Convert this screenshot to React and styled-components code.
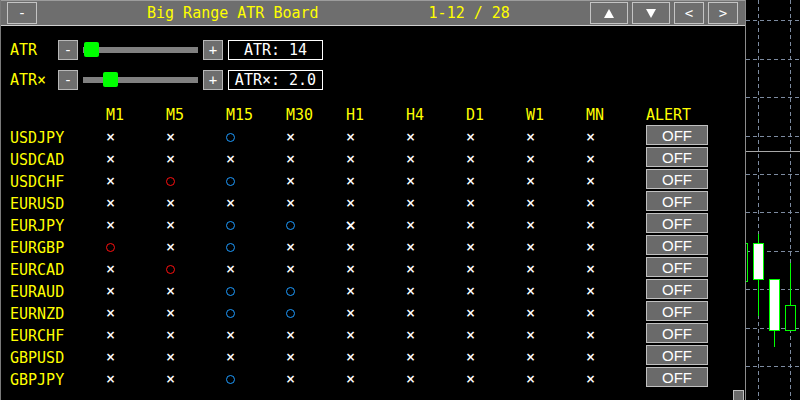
import React from "react";
import styled, { createGlobalStyle } from "styled-components";

const GlobalStyle = createGlobalStyle`
  html, body {
    margin: 0;
    padding: 0;
    background: #000000;
    overflow: hidden;
  }
`;

const Screen = styled.div`
  display: flex;
  width: 800px;
  height: 400px;
  background: #000000;
  overflow: hidden;
  font-family: "DejaVu Sans Mono", "Liberation Mono", monospace;
  font-size: 15px;
`;

const Panel = styled.div`
  position: relative;
  display: flex;
  flex-direction: column;
  width: 746px;
  flex-shrink: 0;
  box-sizing: border-box;
  border-left: 1px solid #7a7a7a;
  border-right: 1px solid #8c8c8c;
`;

const TitleBar = styled.div`
  display: flex;
  align-items: center;
  height: 24px;
  background: #6e6e6e;
  border-top: 1px solid #9c9c9c;
  border-bottom: 1px solid #cfcfcf;
  padding: 0 7px 0 6px;
`;

const BarButton = styled.div`
  display: flex;
  align-items: center;
  justify-content: center;
  width: ${(p) => p.$w}px;
  height: 22px;
  box-sizing: border-box;
  border: 1px solid #c4c4c4;
  background: #6e6e6e;
  color: #ffffff;
  font-size: 14px;
`;

const TitleText = styled.span`
  margin-left: 110px;
  color: #ffff00;
  white-space: pre;
`;

const PageText = styled.span`
  margin-left: 110px;
  color: #ffff00;
  white-space: pre;
`;

const NavGroup = styled.div`
  display: flex;
  gap: 4px;
  margin-left: auto;
`;

const Controls = styled.div`
  display: flex;
  flex-direction: column;
  gap: 10px;
  padding: 14px 0 0 9px;
`;

const ControlRow = styled.div`
  display: flex;
  align-items: center;
  height: 20px;
`;

const Label = styled.span`
  width: 48px;
  color: #ffff00;
`;

const StepButton = styled.div`
  display: flex;
  align-items: center;
  justify-content: center;
  width: 20px;
  height: 20px;
  box-sizing: border-box;
  border: 1px solid #b8b8b8;
  background: #6e6e6e;
  color: #ffffff;
  font-size: 14px;
`;

const Track = styled.div`
  position: relative;
  width: 115px;
  height: 6px;
  margin: 0 5px;
  background: #808080;
`;

const Thumb = styled.div`
  position: absolute;
  top: 50%;
  width: 15px;
  height: 15px;
  margin-top: -8px;
  border-radius: 2px;
  background: #00ff00;
`;

const ValueBox = styled.div`
  display: flex;
  align-items: center;
  justify-content: center;
  width: 95px;
  height: 20px;
  margin-left: 5px;
  box-sizing: border-box;
  border: 1px solid #ffffff;
  color: #ffffff;
  white-space: pre;
`;

const Table = styled.div`
  display: grid;
  grid-template-columns: 96px repeat(9, 60px) 62px;
  grid-auto-rows: 22px;
  margin-top: 13px;
  padding-left: 9px;
`;

const HeadCell = styled.div`
  color: #ffff00;
  line-height: 22px;
  padding-top: 1px;
`;

const SymbolCell = styled.div`
  color: #ffff00;
  line-height: 22px;
  padding-top: 2px;
`;

const MarkCell = styled.div`
  display: flex;
  align-items: center;
  justify-content: center;
  width: 9px;
  height: 22px;
  padding-top: 2px;
  box-sizing: border-box;
`;

const Cross = styled.span`
  color: #ffffff;
  font-family: "DejaVu Sans", sans-serif;
  font-size: ${(p) => (p.$strong ? 14 : 12)}px;
  font-weight: bold;
  line-height: 1;
`;

const Ring = styled.span`
  width: 9px;
  height: 9px;
  box-sizing: border-box;
  border: 1.5px solid ${(p) => p.$color};
  border-radius: 50%;
`;

const AlertButton = styled.div`
  display: flex;
  align-items: center;
  justify-content: center;
  width: 62px;
  height: 20px;
  box-sizing: border-box;
  border: 1px solid #c0c0c0;
  background: #6a6a6a;
  color: #ffffff;
  font-family: "Liberation Sans", Arial, sans-serif;
  font-size: 15px;
`;

const Grip = styled.div`
  position: absolute;
  right: 1px;
  bottom: -1px;
  width: 11px;
  height: 11px;
  box-sizing: border-box;
  border: 1px solid #c0c0c0;
  background: #6a6a6a;
`;

const Chart = styled.div`
  flex: 1;
  background: #000000;
`;

const frames = ["M1", "M5", "M15", "M30", "H1", "H4", "D1", "W1", "MN"];

const rows = [
  ["USDJPY", "xxbxxxxxx"],
  ["USDCAD", "xxxxxxxxx"],
  ["USDCHF", "xrbxxxxxx"],
  ["EURUSD", "xxxxxxxxx"],
  ["EURJPY", "xxbbXxxxx"],
  ["EURGBP", "rxbxxxxxx"],
  ["EURCAD", "xrxxxxxxx"],
  ["EURAUD", "xxbbxxxxx"],
  ["EURNZD", "xxbbxxxxx"],
  ["EURCHF", "xxxxxxxxx"],
  ["GBPUSD", "xxxxxxxxx"],
  ["GBPJPY", "xxbxxxxxx"],
];

const sliders = [
  { label: "ATR", text: "ATR: 14", pos: 1 },
  { label: "ATR×", text: "ATR×: 2.0", pos: 20 },
];

const Mark = ({ code }) => {
  if (code === "b") return <Ring $color="#1e9bff" />;
  if (code === "r") return <Ring $color="#ff1010" />;
  return <Cross $strong={code === "X"}>×</Cross>;
};

const Triangle = ({ up }) => (
  <svg width="10" height="9" viewBox="0 0 10 9">
    <polygon points={up ? "5,0 10,9 0,9" : "0,0 10,0 5,9"} fill="#ffffff" />
  </svg>
);

const hLines = [20, 59, 97, 136, 174, 212, 251, 289, 328, 366];

const ChartGrid = () => (
  <svg width="54" height="400" viewBox="746 0 54 400">
    {hLines.map((y) => (
      <line key={y} x1="746" x2="800" y1={y + 0.5} y2={y + 0.5} stroke="#7d8ba0" strokeDasharray="4 3" />
    ))}
    <line x1="758.5" x2="758.5" y1="0" y2="400" stroke="#7d8ba0" strokeDasharray="4 3" />
    <line x1="790.5" x2="790.5" y1="0" y2="400" stroke="#7d8ba0" strokeDasharray="4 3" />
    <line x1="746" x2="800" y1="151.5" y2="151.5" stroke="#a8a8a8" />
    {/* candles */}
    <rect x="740.5" y="243.5" width="7" height="38" fill="#000" stroke="#00ff00" />
    <line x1="758.5" x2="758.5" y1="234" y2="316" stroke="#00ff00" />
    <rect x="753.5" y="243.5" width="10" height="36" fill="#ffffff" stroke="#00ff00" />
    <line x1="774.5" x2="774.5" y1="279" y2="347" stroke="#00ff00" />
    <rect x="769.5" y="279.5" width="10" height="51" fill="#ffffff" stroke="#00ff00" />
    <line x1="790.5" x2="790.5" y1="263" y2="306" stroke="#00ff00" />
    <rect x="785.5" y="305.5" width="10" height="25" fill="#000000" stroke="#00ff00" />
  </svg>
);

const App = () => {
  return (
    <>
      <GlobalStyle />
      <Screen>
        <Panel>
          <TitleBar>
            <BarButton $w={30}>-</BarButton>
            <TitleText>Big Range ATR Board</TitleText>
            <PageText>1-12 / 28</PageText>
            <NavGroup>
              <BarButton $w={38}>
                <Triangle up />
              </BarButton>
              <BarButton $w={38}>
                <Triangle />
              </BarButton>
              <BarButton $w={30}>&lt;</BarButton>
              <BarButton $w={30}>&gt;</BarButton>
            </NavGroup>
          </TitleBar>

          <Controls>
            {sliders.map((s) => (
              <ControlRow key={s.label}>
                <Label>{s.label}</Label>
                <StepButton>-</StepButton>
                <Track>
                  <Thumb style={{ left: s.pos }} />
                </Track>
                <StepButton>+</StepButton>
                <ValueBox>{s.text}</ValueBox>
              </ControlRow>
            ))}
          </Controls>

          <Table>
            <HeadCell />
            {frames.map((f) => (
              <HeadCell key={f}>{f}</HeadCell>
            ))}
            <HeadCell>ALERT</HeadCell>
            {rows.map(([sym, marks]) => (
              <React.Fragment key={sym}>
                <SymbolCell>{sym}</SymbolCell>
                {marks.split("").map((c, i) => (
                  <MarkCell key={i}>
                    <Mark code={c} />
                  </MarkCell>
                ))}
                <div>
                  <AlertButton>OFF</AlertButton>
                </div>
              </React.Fragment>
            ))}
          </Table>
          <Grip />
        </Panel>
        <Chart>
          <ChartGrid />
        </Chart>
      </Screen>
    </>
  );
};

export default App;
